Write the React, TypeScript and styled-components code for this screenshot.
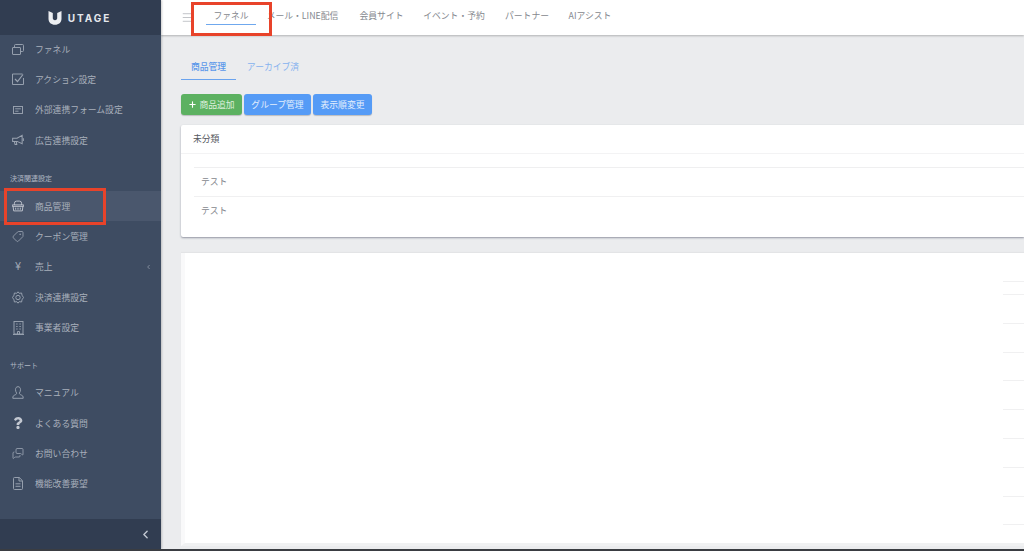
import React from "react";
import styled, { createGlobalStyle } from "styled-components";
import { Tag, ChevronLeft, Menu, Plus, MessagesSquare } from "lucide-react";
import { FaQuestion } from "react-icons/fa";

const Global = createGlobalStyle`
  html, body { margin: 0; padding: 0; height: 100%; overflow: hidden; }
  body { font-family: "Noto Sans CJK JP", "Noto Sans", sans-serif; background: #ebecee; }
  * { box-sizing: border-box; }
`;

const Shell = styled.div`
  position: relative;
  width: 1024px;
  height: 551px;
  display: flex;
  overflow: hidden;
  background: #ebecee;
  border-bottom: 2px solid #3a3d42;
`;

const Sidebar = styled.aside`
  width: 161px;
  flex: none;
  display: flex;
  flex-direction: column;
  background: #3e4c62;
  box-shadow: 1px 0 2px rgba(0, 0, 0, 0.2);
  z-index: 2;
`;

const Brand = styled.div`
  height: 35px;
  flex: none;
  display: flex;
  align-items: center;
  justify-content: center;
  gap: 6px;
  background: #313d51;
  padding-right: 2px;
`;

const BrandName = styled.span`
  font-family: "Inter", sans-serif;
  color: #e4e7ec;
  font-size: 10px;
  font-weight: 700;
  letter-spacing: 2px;
`;

const Nav = styled.nav`
  flex: 1;
  margin-top: -1px;
  display: flex;
  flex-direction: column;
`;

const NavRow = styled.div<{ $active?: boolean }>`
  height: 30.3px;
  flex: none;
  display: flex;
  align-items: center;
  padding-left: 12px;
  position: relative;
  color: #a9b0bc;
  font-size: 8.8px;
  background: ${(p) => (p.$active ? "#4a576d" : "transparent")};
`;

const IconSlot = styled.span`
  width: 12px;
  height: 14px;
  margin-right: 11px;
  display: flex;
  align-items: center;
  justify-content: center;
  color: #9aa3b1;
  flex: none;
`;

const YenGlyph = styled.span`
  font-family: "Liberation Sans", sans-serif;
  font-size: 10px;
  line-height: 14px;
  color: #a3abb8;
`;

const Caret = styled.span`
  position: absolute;
  right: 9px;
  top: 50%;
  transform: translateY(-50%);
  display: flex;
  color: #b0b7c3;
`;

const SectionLabel = styled.div<{ $top: number; $bottom: number }>`
  margin-top: ${(p) => p.$top}px;
  margin-bottom: ${(p) => p.$bottom}px;
  padding-left: 10px;
  color: #b0b7c3;
  font-size: 7px;
  line-height: 10px;
`;

const Collapse = styled.div`
  height: 30px;
  flex: none;
  display: flex;
  align-items: center;
  justify-content: flex-end;
  padding-right: 9px;
  background: #313d51;
  color: #c2c8d2;
`;

const Main = styled.main`
  flex: 1;
  min-width: 0;
  display: flex;
  flex-direction: column;
`;

const TopBar = styled.header`
  height: 35px;
  flex: none;
  display: flex;
  align-items: center;
  background: #fff;
  box-shadow: 0 1px 2px rgba(0, 0, 0, 0.25);
  padding-left: 20px;
  z-index: 1;
`;

const Burger = styled.span`
  display: flex;
  color: #8f939a;
  margin-right: 12px;
`;

const TopLink = styled.a<{ $active?: boolean; $w: number }>`
  width: ${(p) => p.$w}px;
  flex: none;
  height: 18px;
  margin-bottom: 3px;
  display: flex;
  align-items: center;
  justify-content: center;
  font-size: 8.8px;
  color: #85888e;
  white-space: nowrap;
  border-bottom: 1px solid ${(p) => (p.$active ? "#6fa8ee" : "transparent")};
`;

const Content = styled.div`
  flex: 1;
  padding: 16px 0 0 20px;
  display: flex;
  flex-direction: column;
  min-height: 0;
`;

const Tabs = styled.div`
  display: flex;
  height: 29px;
  flex: none;
`;

const Tab = styled.div<{ $active?: boolean }>`
  width: ${(p) => (p.$active ? 55 : 74)}px;
  padding-top: 2px;
  display: flex;
  align-items: center;
  justify-content: center;
  font-size: 8.8px;
  font-weight: ${(p) => (p.$active ? 500 : 400)};
  color: ${(p) => (p.$active ? "#5a97ea" : "#86b2ef")};
  border-bottom: 1px solid ${(p) => (p.$active ? "#6aa3ee" : "transparent")};
`;

const Actions = styled.div`
  display: flex;
  gap: 2px;
  margin-top: 14px;
  flex: none;
`;

const Button = styled.button<{ $green?: boolean; $w: number }>`
  width: ${(p) => p.$w}px;
  height: 21px;
  border: none;
  border-radius: 3px;
  padding: 0;
  display: flex;
  align-items: center;
  justify-content: center;
  gap: 2px;
  font-family: inherit;
  font-size: 8.8px;
  color: ${(p) => (p.$green ? "#dff0df" : "#e3eefc")};
  background: ${(p) => (p.$green ? "#5cb161" : "#559bf6")};
  box-shadow: 0 1px 1px rgba(0, 0, 0, 0.2);
`;

const GroupCard = styled.section`
  margin-top: 10px;
  height: 112px;
  flex: none;
  background: #fff;
  border-radius: 2px 0 0 2px;
  box-shadow: 0 1px 2px rgba(40, 45, 70, 0.45);
`;

const CardTitle = styled.div`
  height: 29px;
  display: flex;
  align-items: center;
  padding: 0 0 1px 12px;
  font-size: 8.8px;
  color: #55585e;
  border-bottom: 1px solid #f3f3f4;
`;

const RowList = styled.div`
  margin: 13px 0 0 13px;
  border-top: 1px solid #efeff0;
`;

const ProductRow = styled.div`
  height: 28px;
  display: flex;
  align-items: center;
  padding: 0 0 1px 7px;
  font-size: 8.8px;
  color: #85888e;
  & + & { border-top: 1px solid #f0f0f1; height: 29px; }
`;

const ListCard = styled.section`
  margin-top: 16px;
  height: 293px;
  flex: none;
  background: #fff;
  box-shadow: 0 -1px 1px rgba(0, 0, 0, 0.03);
  padding-top: 28px;
  border-bottom: 3px solid #f0f1f2;
  border-left: 4px solid #f9f9fa;
`;

const EdgeLines = styled.div`
  margin-left: auto;
  width: 21px;
  display: flex;
  flex-direction: column;
`;

const EdgeLine = styled.div<{ $h: number }>`
  height: ${(p) => p.$h}px;
  flex: none;
  border-top: 1px solid #f0f0f1;
`;

const Callout = styled.div<{ $x: number; $y: number; $w: number; $h: number }>`
  position: absolute;
  left: ${(p) => p.$x}px;
  top: ${(p) => p.$y}px;
  width: ${(p) => p.$w}px;
  height: ${(p) => p.$h}px;
  border: 3px solid #e8432a;
  z-index: 5;
`;

const LogoMark = () => (
  <svg width="14" height="15" viewBox="0 0 14 15" aria-hidden="true">
    <path d="M0.5 1 L4.8 3 L4.8 8 C4.8 9.4 5.6 10.2 7 10.2 C8.4 10.2 9.2 9.4 9.2 8 L9.2 3 L13.5 1 L13.5 8.8 C13.5 12.5 10.8 14.8 7 14.8 C3.2 14.8 0.5 12.5 0.5 8.8 Z" fill="#eceef1" />
  </svg>
);

type SvgProps = { w: number; h: number; children: React.ReactNode };
const Glyph = ({ w, h, children }: SvgProps) => (
  <svg width={w} height={h} viewBox={`0 0 ${w} ${h}`} fill="none" stroke="currentColor" strokeWidth="0.95" aria-hidden="true">
    {children}
  </svg>
);

const firstGroup = [
  {
    label: "ファネル",
    icon: (
      <Glyph w={12} h={11}>
        <rect x="0.5" y="3.5" width="8" height="7" rx="0.5" />
        <path d="M2.5 3.5 V1.5 Q2.5 0.5 3.5 0.5 H10.5 Q11.5 0.5 11.5 1.5 V6.5 Q11.5 7.5 10.5 7.5 H8.5" />
      </Glyph>
    ),
  },
  {
    label: "アクション設定",
    icon: (
      <Glyph w={12} h={12}>
        <path d="M10.5 1 H0.5 V11.5 H11.5 V5" />
        <path d="M3 6 L5.5 8.5 L11 1.5" strokeWidth="1.2" />
      </Glyph>
    ),
  },
  {
    label: "外部連携フォーム設定",
    icon: (
      <Glyph w={10} h={8}>
        <rect x="0.5" y="0.5" width="9" height="7" />
        <path d="M2.2 2.8 H7.8 M2.2 5.2 H5.5" />
      </Glyph>
    ),
  },
  {
    label: "広告連携設定",
    icon: (
      <Glyph w={13} h={12}>
        <path d="M0.7 4 H5.5 L11 1 V10 L5.5 7.5 H0.7 Z" strokeWidth="1.1" />
        <path d="M2.5 7.5 L3.3 11 H5.2 L4.6 7.5 M12.3 4 V7" strokeWidth="1.1" />
      </Glyph>
    ),
  },
];

const secondGroup = [
  {
    label: "商品管理",
    icon: (
      <svg width="13" height="12" viewBox="0 0 13 12" fill="none" stroke="#c3c8d1" strokeWidth="1" aria-hidden="true">
        <path d="M2.6 4.8 V3 Q2.6 0.7 5 0.7 H8 Q10.4 0.7 10.4 3 V4.8" />
        <path d="M0.3 4.8 H12.7 V6.4 H0.3 Z" />
        <path d="M1.2 6.4 L1.8 11.3 H11.2 L11.8 6.4" />
        <path d="M4 7.8 V10 M6.5 7.8 V10 M9 7.8 V10" />
      </svg>
    ),
    active: true,
  },
  { label: "クーポン管理", icon: <Tag size={13} strokeWidth={1.7} style={{ transform: "scaleX(-1)" }} /> },
  { label: "売上", icon: <YenGlyph>¥</YenGlyph>, caret: true },
  {
    label: "決済連携設定",
    icon: (
      <Glyph w={12} h={13}>
        <path d="M6 0.8 L7.2 2.3 L9.6 2 L10 4.2 L11.5 6.5 L10 8.8 L9.6 11 L7.2 10.7 L6 12.2 L4.8 10.7 L2.4 11 L2 8.8 L0.5 6.5 L2 4.2 L2.4 2 L4.8 2.3 Z" />
        <circle cx="6" cy="6.5" r="2.2" />
      </Glyph>
    ),
  },
  {
    label: "事業者設定",
    icon: (
      <Glyph w={11} h={14}>
        <rect x="1" y="0.5" width="9" height="12.5" />
        <path d="M0 13.5 H11" />
        <path d="M3.2 3 H4.6 M6.4 3 H7.8 M3.2 5.5 H4.6 M6.4 5.5 H7.8 M3.2 8 H4.6 M6.4 8 H7.8 M4.5 13 V10.5 H6.5 V13" />
      </Glyph>
    ),
  },
];

const thirdGroup = [
  {
    label: "マニュアル",
    icon: (
      <Glyph w={12} h={13}>
        <path d="M6 0.7 C4.3 0.7 3.5 2 3.5 3.7 C3.5 5.2 4.1 6.3 4.6 7 C4.7 8 4 8.5 2.8 9 C1.5 9.5 0.8 10 0.8 12.3 H11.2 C11.2 10 10.5 9.5 9.2 9 C8 8.5 7.3 8 7.4 7 C7.9 6.3 8.5 5.2 8.5 3.7 C8.5 2 7.7 0.7 6 0.7 Z" />
      </Glyph>
    ),
  },
  { label: "よくある質問", icon: <FaQuestion size={12} color="#c3c8d1" /> },
  { label: "お問い合わせ", icon: <MessagesSquare size={13} strokeWidth={1.7} style={{ transform: "scaleX(-1)" }} /> },
  {
    label: "機能改善要望",
    icon: (
      <Glyph w={10} h={13}>
        <path d="M0.5 1.5 Q0.5 0.5 1.5 0.5 H6.3 L9.5 3.7 V11.5 Q9.5 12.5 8.5 12.5 H1.5 Q0.5 12.5 0.5 11.5 Z" />
        <path d="M6 0.5 V4 H9.5 M2.5 6.8 H7.5 M2.5 9.3 H7.5" />
      </Glyph>
    ),
  },
];

type Item = { label: string; icon: React.ReactNode; active?: boolean; caret?: boolean };

const Rows = ({ items }: { items: Item[] }) => (
  <>
    {items.map((it) => (
      <NavRow key={it.label} $active={it.active}>
        <IconSlot>{it.icon}</IconSlot>
        {it.label}
        {it.caret && (
          <Caret>
            <ChevronLeft size={7} strokeWidth={2} />
          </Caret>
        )}
      </NavRow>
    ))}
  </>
);

const topLinks = [
  { label: "ファネル", w: 50, active: true },
  { label: "メール・LINE配信", w: 93 },
  { label: "会員サイト", w: 65 },
  { label: "イベント・予約", w: 80 },
  { label: "パートナー", w: 66 },
  { label: "AIアシスト", w: 60 },
];

const edgeHeights = [13, 28.8, 28.8, 28.8, 28.8, 28.8, 28.8, 28.8, 28.8, 20];

export default function App() {
  return (
    <Shell>
      <Global />
      <Sidebar>
        <Brand>
          <LogoMark />
          <BrandName>UTAGE</BrandName>
        </Brand>
        <Nav>
          <Rows items={firstGroup} />
          <SectionLabel $top={18} $bottom={8}>決済関連設定</SectionLabel>
          <Rows items={secondGroup} />
          <SectionLabel $top={17} $bottom={8}>サポート</SectionLabel>
          <Rows items={thirdGroup} />
        </Nav>
        <Collapse>
          <ChevronLeft size={13} strokeWidth={2.6} />
        </Collapse>
      </Sidebar>
      <Main>
        <TopBar>
          <Burger>
            <Menu size={13} strokeWidth={1} />
          </Burger>
          {topLinks.map((l) => (
            <TopLink key={l.label} $active={l.active} $w={l.w}>
              {l.label}
            </TopLink>
          ))}
        </TopBar>
        <Content>
          <Tabs>
            <Tab $active>商品管理</Tab>
            <Tab>アーカイブ済</Tab>
          </Tabs>
          <Actions>
            <Button $green $w={61}>
              <Plus size={9} strokeWidth={3} color="#fff" />
              商品追加
            </Button>
            <Button $w={67}>グループ管理</Button>
            <Button $w={59}>表示順変更</Button>
          </Actions>
          <GroupCard>
            <CardTitle>未分類</CardTitle>
            <RowList>
              <ProductRow>テスト</ProductRow>
              <ProductRow>テスト</ProductRow>
            </RowList>
          </GroupCard>
          <ListCard>
            <EdgeLines>
              {edgeHeights.map((h, i) => (
                <EdgeLine key={i} $h={h} />
              ))}
            </EdgeLines>
          </ListCard>
        </Content>
      </Main>
      <Callout $x={191} $y={2} $w={81} $h={34} />
      <Callout $x={4} $y={188} $w={102} $h={37} />
    </Shell>
  );
}
